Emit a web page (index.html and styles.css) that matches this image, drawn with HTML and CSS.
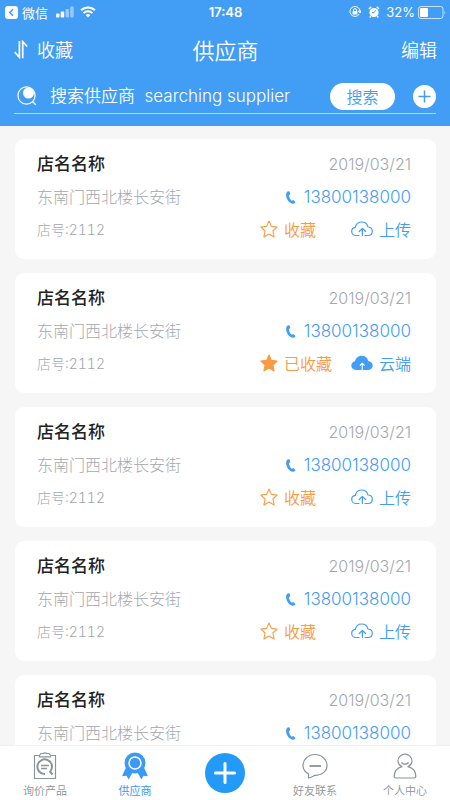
FILE: index.html
```html
<!DOCTYPE html>
<html lang="zh-CN">
<head>
<meta charset="utf-8">
<meta name="viewport" content="width=device-width, initial-scale=1">
<title>供应商</title>
<link rel="stylesheet" href="styles.css">
</head>
<body>
<svg class="sprite" aria-hidden="true">
  <symbol id="phone" viewBox="0 0 12 16"><path d="M2.900 2.200 4.700 2.400 5.300 5 3.900 6.300c.3 2.400 1.300 4.200 2.900 5.400l1.700-.6 2 2c-.4 1-1.300 1.600-2.500 1.600C4.300 14.300 1.100 10.300 1.100 6c0-1.800.6-3.100 1.800-3.800Z" fill="currentColor"/></symbol>
  <symbol id="star" viewBox="0 0 18 18"><path d="m9 1 2.400 5.400 5.700.6-4.200 4 1.200 5.900L9 14l-5.100 2.900L5.100 11 .9 7l5.700-.6Z" stroke="currentColor" stroke-width="1.100" stroke-linejoin="round"/></symbol>
  <symbol id="cloud-up" viewBox="0 0 22 16"><path d="M8 14.500H5.200C2.600 14.500.7 12.700.7 10.400c0-2.200 1.600-3.700 3.600-4C5 3 7.500 1 10.700 1c3.300 0 5.600 1.900 6.200 5 2.500.1 4.400 1.900 4.400 4.200 0 2.500-1.900 4.300-4.500 4.300H14M11.400 14.500V7.800M8.200 10.500l3.200-3 3.200 3" fill="none" stroke="currentColor" stroke-width="1.200" stroke-linecap="round" stroke-linejoin="round"/></symbol>
  <symbol id="cloud-full" viewBox="0 0 22 16"><path d="M5.200 15C2.300 15 .3 13.100.3 10.600c0-2.300 1.700-4 3.700-4.400C4.800 2.900 7.400.8 10.700.8c3.300 0 5.800 2 6.500 5.200 2.500.2 4.500 2 4.500 4.500 0 2.600-2 4.500-4.900 4.500Z" fill="currentColor"/><path d="M11.200 15V8.500M8.900 10.500l2.300-2.200 2.300 2.200" fill="none" stroke="#fff" stroke-width="1.100"/></symbol>
</svg>

<header class="top">
  <div class="status">
    <div class="status-side">
      <svg class="back-app" viewBox="0 0 13 13"><rect width="13" height="13" rx="3" fill="#fff"/><path d="M8 3.200 4.800 6.500 8 9.800" fill="none" stroke="#429df4" stroke-width="1.500"/></svg>
      <span class="status-app">微信</span>
      <svg class="signal" viewBox="0 0 18 12" fill="#fff"><rect y="7.500" width="3.500" height="4" rx="1"/><rect x="4.700" y="5.500" width="3.500" height="6" rx="1"/><rect x="9.500" y="3" width="3.500" height="8.500" rx="1" opacity=".45"/><rect x="14.200" y=".5" width="3.500" height="11" rx="1" opacity=".45"/></svg>
      <svg class="wifi" viewBox="0 0 16 12" fill="none" stroke="#fff"><path d="M1 4.300a10 10 0 0 1 14 0" stroke-width="2"/><path d="M3.600 7.100a6.300 6.300 0 0 1 8.800 0" stroke-width="1.900"/><path d="M8 11.500 5.600 9.100a3.500 3.500 0 0 1 4.800 0Z" fill="#fff" stroke="none"/></svg>
    </div>
    <span class="status-time">17:48</span>
    <div class="status-side status-right">
      <svg class="lock" viewBox="0 0 12 12" fill="none" stroke="#fff"><path d="M10.300 8A5 5 0 1 1 11 5.500M9.300 5h3L11 7Z"/><rect x="3.600" y="5" width="4.800" height="3.500" fill="#fff" stroke="none"/><path d="M4.600 5V4a1.400 1.400 0 0 1 2.800 0v1"/></svg>
      <svg class="alarm" viewBox="0 0 12 12"><circle cx="6" cy="6.500" r="4.600" fill="#fff"/><path d="M.9 3 3.200.9M11.100 3 8.800.9M2.800 10.200l-1 1.300M9.200 10.200l1 1.300" stroke="#fff" stroke-width="1.500"/><path d="M7.700 4.300 6 6.700H3.800" fill="none" stroke="#429df4"/></svg>
      <span class="percent">32%</span>
      <svg class="battery" viewBox="0 0 28 13"><rect x=".5" y=".5" width="24.500" height="12" rx="2.500" fill="none" stroke="#fff" opacity=".7"/><rect x="2" y="2" width="8" height="9" rx="1" fill="#fff"/><path d="M26.500 4.500q1.300 2 0 4Z" fill="#fff" opacity=".7"/></svg>
    </div>
  </div>
  <div class="nav">
    <button class="nav-btn" type="button"><svg class="sort" viewBox="0 0 14 19" fill="none" stroke="#fff" stroke-width="1.700"><path d="M5.400 1v16.300L.7 12.200M8.700 18.200V1.700l4.500 4.800"/></svg>收藏</button>
    <h1 class="title">供应商</h1>
    <button class="nav-btn nav-end" type="button">编辑</button>
  </div>
  <form class="search">
    <label class="search-label" for="q" aria-label="搜索供应商"><svg class="lens" viewBox="0 0 20 20"><circle cx="9.500" cy="9.500" r="8.600" fill="none" stroke="#fff" stroke-width="1.200"/><circle cx="11.500" cy="7" r="5.500" fill="#fff"/><path d="m15.500 15.500 3.200 3.200" stroke="#fff" stroke-width="1.300"/></svg></label>
    <input class="search-input" id="q" type="text" placeholder="搜索供应商&nbsp; searching supplier">
    <button class="search-btn" type="button">搜索</button>
    <button class="add" type="button" aria-label="添加"><svg viewBox="0 0 23 23"><circle cx="11.500" cy="11.500" r="11.500" fill="#fff"/><path d="M11.500 5.500v12M5.500 11.500h12" stroke="#429df4" stroke-width="1.500"/></svg></button>
  </form>
</header>

<main class="list">
  <article class="card">
    <div class="row"><h2 class="name">店名名称</h2><time class="date">2019/03/21</time></div>
    <div class="row"><span class="address">东南门西北楼长安街</span><a class="tel" href="tel:13800138000"><svg class="phone"><use href="#phone"/></svg>13800138000</a></div>
    <div class="row"><span class="number">店号:2112</span><div class="actions"><button class="fav" type="button"><svg class="star"><use href="#star"/></svg>收藏</button><button class="upload" type="button"><svg class="cloud"><use href="#cloud-up"/></svg>上传</button></div></div>
  </article>
  <article class="card">
    <div class="row"><h2 class="name">店名名称</h2><time class="date">2019/03/21</time></div>
    <div class="row"><span class="address">东南门西北楼长安街</span><a class="tel" href="tel:13800138000"><svg class="phone"><use href="#phone"/></svg>13800138000</a></div>
    <div class="row"><span class="number">店号:2112</span><div class="actions"><button class="fav" type="button"><svg class="star star-on"><use href="#star"/></svg>已收藏</button><button class="upload" type="button"><svg class="cloud"><use href="#cloud-full"/></svg>云端</button></div></div>
  </article>
  <article class="card">
    <div class="row"><h2 class="name">店名名称</h2><time class="date">2019/03/21</time></div>
    <div class="row"><span class="address">东南门西北楼长安街</span><a class="tel" href="tel:13800138000"><svg class="phone"><use href="#phone"/></svg>13800138000</a></div>
    <div class="row"><span class="number">店号:2112</span><div class="actions"><button class="fav" type="button"><svg class="star"><use href="#star"/></svg>收藏</button><button class="upload" type="button"><svg class="cloud"><use href="#cloud-up"/></svg>上传</button></div></div>
  </article>
  <article class="card">
    <div class="row"><h2 class="name">店名名称</h2><time class="date">2019/03/21</time></div>
    <div class="row"><span class="address">东南门西北楼长安街</span><a class="tel" href="tel:13800138000"><svg class="phone"><use href="#phone"/></svg>13800138000</a></div>
    <div class="row"><span class="number">店号:2112</span><div class="actions"><button class="fav" type="button"><svg class="star"><use href="#star"/></svg>收藏</button><button class="upload" type="button"><svg class="cloud"><use href="#cloud-up"/></svg>上传</button></div></div>
  </article>
  <article class="card">
    <div class="row"><h2 class="name">店名名称</h2><time class="date">2019/03/21</time></div>
    <div class="row"><span class="address">东南门西北楼长安街</span><a class="tel" href="tel:13800138000"><svg class="phone"><use href="#phone"/></svg>13800138000</a></div>
  </article>
</main>

<nav class="tabs">
  <a class="tab" href="#inquiry"><svg class="tab-icon" viewBox="0 0 28 28" fill="none" stroke="#8b9499" stroke-width="1.200"><path d="M8.500 3.500H3.500v23h21v-23h-5l-1.500-2h-2.200Q14 .2 12.200 1.500H10L8.500 3.500v1.300h11V3.500"/><g stroke-width="2"><path d="M19.600 19A7.300 7.300 0 1 0 14 22M18.500 19l3 3.500"/><path d="M10 13.500h8M10 16.500h6" stroke-width="1.600"/></g></svg>询价产品</a>
  <a class="tab tab-on" href="#suppliers"><svg class="tab-icon" viewBox="0 0 28 28"><path d="m5 15.500-4 8.800 4.500-.5 2.200 3.700 4.500-8.500ZM23 15.500l4 8.800-4.500-.5-2.200 3.700-4.500-8.500Z" fill="#3b9af5"/><circle cx="14" cy="11" r="10.500" fill="#3b9af5"/><circle cx="14" cy="11" r="6" fill="none" stroke="#fff" stroke-width="1.500"/></svg>供应商</a>
  <button class="tab tab-plus" type="button" aria-label="新建"><svg class="plus" viewBox="0 0 40 40"><circle cx="20" cy="20" r="20" fill="#249af8"/><path d="M20 10.500v19M10.500 20h19" stroke="#fff" stroke-width="3" stroke-linecap="round"/></svg></button>
  <a class="tab" href="#friends"><svg class="tab-icon" viewBox="0 0 28 28" fill="none" stroke="#8b9499" stroke-width="1.200"><path d="M7.500 26V21.800C4 19.900 2 17 2 13.400 2 7.500 7.200 2.500 14 2.500s12 5 12 10.900c0 6-5.200 9.900-12.200 9.900Q11 25.500 7.500 26Z" stroke-linejoin="round"/><path d="M8.500 14h11.500" stroke-width="1.800"/></svg>好友联系</a>
  <a class="tab" href="#me"><svg class="tab-icon" viewBox="0 0 28 28" fill="none" stroke="#8b9499" stroke-width="1.200"><path d="M11 14.600Q7 12.800 7 9a7 6.800 0 0 1 14 0q0 3.800-4 5.600c4.800 1.200 7.800 4.900 7.800 10q0 1.400-1.400 1.400H4.600q-1.400 0-1.400-1.400c0-5.100 3-8.800 7.800-10Z" stroke-linejoin="round"/><path d="M10.500 10.500q3.500 3.600 7 0" stroke-width="1.400"/></svg>个人中心</a>
</nav>
</body>
</html>
```
FILE: styles.css
```css
* { box-sizing: border-box; }

body {
  margin: 0;
  height: 100vh;
  display: flex;
  flex-direction: column;
  background: #f6f6f6;
  font-family: Inter, "Noto Sans CJK SC", sans-serif;
  font-size: 16px;
  font-weight: 300;
}

button, input {
  margin: 0;
  padding: 0;
  border: 0;
  background: none;
  color: inherit;
  font: inherit;
  white-space: nowrap;
}

a { color: inherit; text-decoration: none; }
svg { display: block; flex: none; }
.sprite { position: absolute; width: 0; height: 0; }

/* Header */
.top { flex: none; height: 126px; background: #429df4; color: #fff; font-weight: 350; }

.status {
  display: grid;
  grid-template-columns: 1fr auto 1fr;
  align-items: center;
  height: 24px;
  padding: 0 4px 0 5px;
  font-size: 13px;
  font-weight: 400;
}
.status-side { display: flex; align-items: center; }
.status-right { justify-content: flex-end; }
.status-app { margin: 0 8px 0 4px; }
.status-time { font-weight: 600; }
.back-app { width: 13px; height: 13px; }
.signal { width: 18px; height: 12px; }
.wifi { width: 16px; height: 12px; margin-left: 6px; }
.lock, .alarm { width: 12px; height: 12px; }
.alarm { margin: 0 6px 0 7px; }
.battery { width: 28px; height: 13px; margin-left: 3px; }

.nav {
  display: grid;
  grid-template-columns: 1fr auto 1fr;
  align-items: center;
  height: 50px;
  padding: 0 13px 0 14px;
}
.nav-btn {
  display: flex;
  align-items: center;
  gap: 9px;
  font-size: 18px;
}
.nav-end { justify-self: end; }
.sort { width: 14px; height: 19px; }
.title { margin: 0; font-size: 22px; font-weight: 350; }

.search {
  display: flex;
  align-items: center;
  height: 40px;
  margin: 0 14px;
  padding-top: 5px;
  border-bottom: 1px solid #b3d8fb;
}
.search-label { margin: 0 13px 0 3px; }
.lens { width: 20px; height: 20px; }
.search-input { flex: 1; min-width: 0; font-size: 17px; outline: 0; }
.search-input::placeholder { color: #fff; opacity: 1; }
.search-btn {
  width: 65px;
  height: 27px;
  border-radius: 14px;
  background: #fff;
  color: #429df4;
}
.add { width: 23px; height: 23px; margin-left: 18px; }

/* Supplier list */
.list {
  flex: 1;
  min-height: 0;
  overflow: auto;
  scrollbar-width: none;
  padding: 13px 14px 0 15px;
}
.card {
  height: 120px;
  margin-bottom: 14px;
  padding: 7px 25px 0 22px;
  border-radius: 9px;
  background: #fff;
}
.row {
  display: flex;
  align-items: center;
  justify-content: space-between;
  height: 33px;
}
.name { margin: 0; color: #222; font-size: 17px; font-weight: 500; }
.date, .tel { padding-top: 2px; }
.date { color: #a3a8ad; }
.address { color: #a3a8ad; }
.number { color: #a3a8ad; font-size: 14px; font-variant-numeric: tabular-nums; }
.tel { display: flex; align-items: center; gap: 7px; color: #429df4; font-size: 17px; }
.phone { width: 12px; height: 16px; }
.actions { display: flex; gap: 19px; font-weight: 350; }
.fav, .upload { display: flex; align-items: center; gap: 6px; }
.fav { width: 72px; color: #f99b42; }
.upload { color: #429df4; }
.star { width: 18px; height: 18px; fill: none; }
.star-on { fill: currentColor; }
.cloud { width: 22px; height: 16px; }

/* Tab bar */
.tabs {
  flex: none;
  display: grid;
  grid-template-columns: repeat(5, 1fr);
  height: 55px;
  border-top: 1px solid #f0f0f0;
  background: #fff;
  color: #8b9499;
  font-size: 11px;
  font-weight: 350;
}
.tab {
  display: flex;
  flex-direction: column;
  align-items: center;
  gap: 2px;
  padding-top: 6px;
}
.tab-on { color: #3b9af5; font-weight: 400; }
.tab-plus { padding-top: 7px; }
.tab-icon { width: 28px; height: 28px; }
.plus { width: 40px; height: 40px; }
```
